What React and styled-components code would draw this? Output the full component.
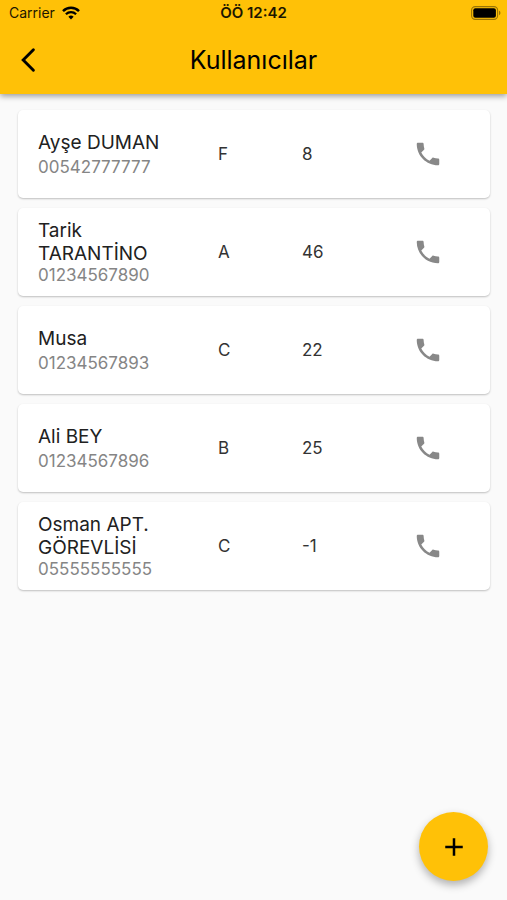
import React from "react";
import styled, { createGlobalStyle } from "styled-components";
import { MdAdd } from "react-icons/md";

const users = [
  { name: "Ayşe DUMAN", phone: "00542777777", block: "F", flat: "8" },
  { name: "Tarik TARANTİNO", phone: "01234567890", block: "A", flat: "46" },
  { name: "Musa", phone: "01234567893", block: "C", flat: "22" },
  { name: "Ali BEY", phone: "01234567896", block: "B", flat: "25" },
  { name: "Osman APT. GÖREVLİSİ", phone: "05555555555", block: "C", flat: "-1" },
];

const WifiIcon = () => (
  <svg width="18" height="14" viewBox="0 0 18 14" fill="none" stroke="#000">
    <path d="M1 5.1a11.5 11.5 0 0 1 16 0" strokeWidth="2.5" />
    <path d="M3.9 8.2a7.3 7.3 0 0 1 10.2 0" strokeWidth="2.3" />
    <path d="M9 13.4l-2.6-2.7a3.7 3.7 0 0 1 5.2 0z" fill="#000" stroke="none" />
  </svg>
);

const BatteryIcon = () => (
  <svg width="30" height="14" viewBox="0 0 30 14">
    <rect
      x="0.6"
      y="0.6"
      width="26"
      height="12.8"
      rx="3.6"
      fill="none"
      stroke="#000"
      strokeOpacity="0.4"
      strokeWidth="1.1"
    />
    <rect x="2.3" y="2.3" width="22.6" height="9.4" rx="2" fill="#000" />
    <path d="M28 4.8c1.9.6 1.9 3.8 0 4.4z" fill="#000" fillOpacity="0.4" />
  </svg>
);

const BackIcon = () => (
  <svg width="16" height="26" viewBox="0 0 16 26" fill="none" stroke="#000">
    <path d="M13.4 2.8L3.2 13l10.2 10.2" strokeWidth="2.9" strokeLinecap="round" />
  </svg>
);

const PhoneIcon = () => (
  <svg width="30" height="30" viewBox="0 0 24 24" fill="currentColor">
    <path d="M6.62 10.79c1.44 2.83 3.76 5.14 6.59 6.59l2.2-2.2c.27-.27.67-.36 1.02-.24 1.12.37 2.33.57 3.57.57.55 0 1 .45 1 1V20c0 .55-.45 1-1 1-9.39 0-17-7.61-17-17 0-.55.45-1 1-1h3.5c.55 0 1 .45 1 1 0 1.25.2 2.45.57 3.57.11.35.03.74-.25 1.02l-2.2 2.2z" />
  </svg>
);

const UserCard = ({ user }) => {
  return (
    <Card>
      <Info>
        <h2>{user.name}</h2>
        <p>{user.phone}</p>
      </Info>
      <Cell>{user.block}</Cell>
      <Cell>{user.flat}</Cell>
      <CallLink href={`tel:${user.phone}`} aria-label={`${user.name} ara`}>
        <PhoneIcon />
      </CallLink>
    </Card>
  );
};

const App = () => {
  return (
    <Page>
      <GlobalStyle />
      <Header>
        <StatusBar>
          <div className="carrier">
            <span>Carrier</span>
            <WifiIcon />
          </div>
          <time>ÖÖ 12:42</time>
          <div className="battery">
            <BatteryIcon />
          </div>
        </StatusBar>
        <Toolbar>
          <BackButton type="button" aria-label="Geri">
            <BackIcon />
          </BackButton>
          <h1>Kullanıcılar</h1>
        </Toolbar>
      </Header>
      <UserList>
        {users.map((user) => (
          <UserCard key={user.phone} user={user} />
        ))}
      </UserList>
      <AddButton type="button" aria-label="Kullanıcı ekle">
        <MdAdd size={30} />
      </AddButton>
    </Page>
  );
};

const GlobalStyle = createGlobalStyle`
  * {
    box-sizing: border-box;
  }
  body {
    margin: 0;
    background-color: #fafafa;
    font-family: Inter, "Liberation Sans", sans-serif;
  }
  h1, h2, p, ul {
    margin: 0;
    padding: 0;
    font-weight: 400;
  }
  button {
    padding: 0;
    border: none;
    font: inherit;
    color: #000;
    cursor: pointer;
  }
`;

const Page = styled.div`
  min-height: 100vh;
`;

const Header = styled.header`
  background-color: #ffc107;
  box-shadow: 0 2px 6px rgba(0, 0, 0, 0.4);
`;

const StatusBar = styled.div`
  display: grid;
  grid-template-columns: 1fr auto 1fr;
  align-items: center;
  height: 26px;
  padding: 0 6px;
  font-size: 14px;
  line-height: 26px;
  color: #1c1600;
  .carrier {
    display: flex;
    align-items: center;
    gap: 7px;
    padding-left: 3px;
  }
  time {
    font-size: 15px;
    font-weight: 600;
  }
  .battery {
    display: flex;
    justify-content: flex-end;
  }
`;

const Toolbar = styled.div`
  display: grid;
  grid-template-columns: 56px 1fr 56px;
  align-items: center;
  height: 68px;
  h1 {
    font-size: 25px;
    line-height: 32px;
    text-align: center;
  }
`;

const BackButton = styled.button`
  display: flex;
  align-items: center;
  justify-content: center;
  height: 56px;
  background: none;
`;

const UserList = styled.ul`
  display: flex;
  flex-direction: column;
  gap: 10px;
  padding: 16px 17px 16px 18px;
  list-style: none;
`;

const Card = styled.li`
  display: grid;
  grid-template-columns: 15fr 7fr 7fr 7fr;
  align-items: center;
  min-height: 88px;
  padding: 10px 20px;
  border-radius: 5px;
  background-color: #fff;
  box-shadow: 0 1px 2px rgba(0, 0, 0, 0.24);
`;

const Info = styled.div`
  display: flex;
  flex-direction: column;
  justify-content: space-between;
  min-height: 47px;
  padding-right: 40px;
  h2 {
    font-size: 19px;
    line-height: 23px;
    color: #212121;
  }
  p {
    font-size: 17px;
    line-height: 21px;
    color: #858585;
  }
`;

const Cell = styled.span`
  font-size: 17px;
  line-height: 21px;
  color: #333;
`;

const CallLink = styled.a`
  display: flex;
  justify-content: center;
  color: #888;
`;

const AddButton = styled.button`
  position: fixed;
  right: 19px;
  bottom: 19px;
  display: flex;
  align-items: center;
  justify-content: center;
  width: 69px;
  height: 69px;
  border-radius: 50%;
  background-color: #ffc107;
  box-shadow: 0 4px 8px rgba(0, 0, 0, 0.3);
`;

export default App;
